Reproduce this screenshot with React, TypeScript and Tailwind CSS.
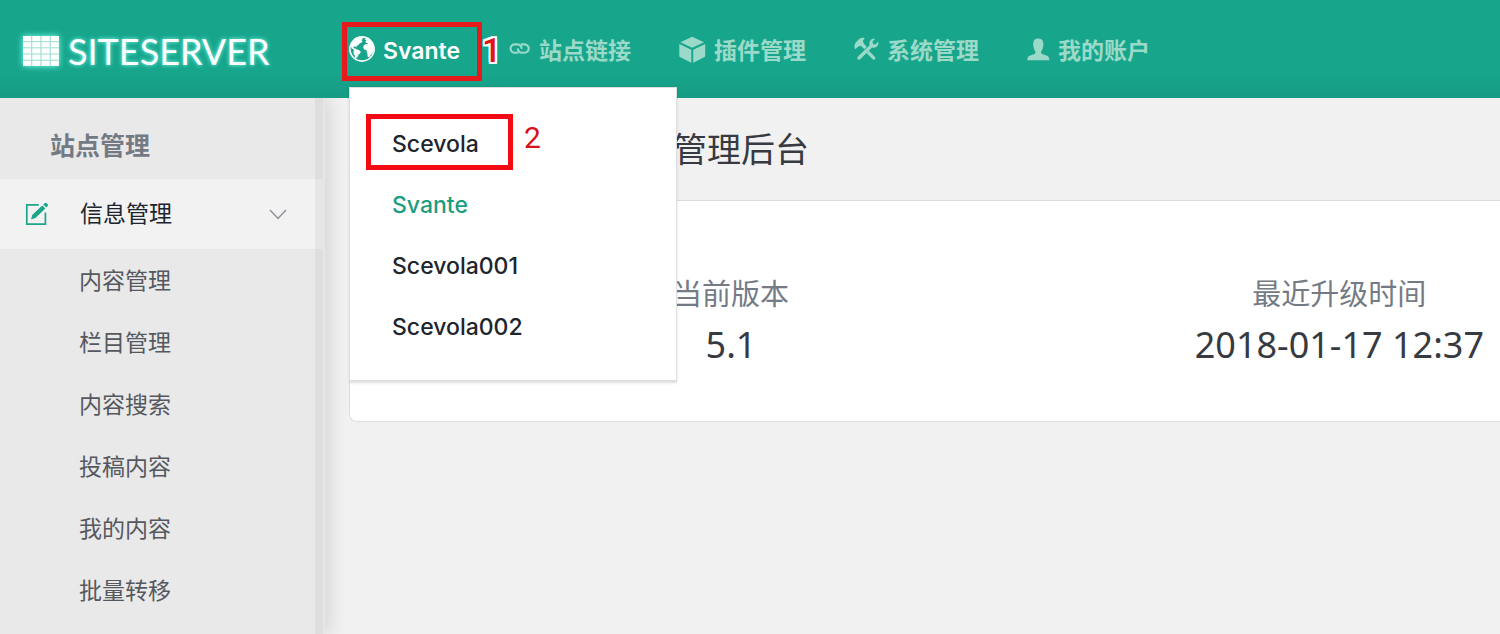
import type { ReactNode } from "react";

type NavItem = {
  label: string;
  icon: ReactNode;
};

const sites = ["Scevola", "Svante", "Scevola001", "Scevola002"];
const currentSite = "Svante";

const contentLinks = ["内容管理", "栏目管理", "内容搜索", "投稿内容", "我的内容", "批量转移"];

const navItems: NavItem[] = [
  { label: "站点链接", icon: <LinkIcon /> },
  { label: "插件管理", icon: <CubeIcon /> },
  { label: "系统管理", icon: <ToolsIcon /> },
  { label: "我的账户", icon: <PersonIcon /> },
];

function GlobeIcon() {
  return (
    <svg viewBox="0 0 26 26" className="-mt-1 size-[26px] shrink-0" fill="currentColor" aria-hidden="true">
      <circle cx="13" cy="13" r="12.1" fill="none" stroke="currentColor" strokeWidth="1.6" />
      <path d="M3.800 6 7 2.800l3.200-1.300 3.400.2.200 1.400-1.600.9 1.400 1.300-1 1.300-1.800.6-.9 1.400-1.900 1.100-.8 1.600-1.400-1-1.300.6.2 1.300 1.700.4 1 .9 2 .2 2.300 1.700-.4 1.800-1.700 1.300-.8 2-1.300 1.200-.3 1.500-1-.4-.5-3.300-1.200-2 .1-2.200.6-1.300-2.600-1.700L1.800 9.500Z" />
      <path d="m15.600 3.200 1.600-1.300 4.200 2.700 2.700 4.300.6 4.300-1.600 4.500-1.500 1-.7 1.700-1.300.9-1-.7-.2-3.300-.9-1.900.3-1.300-2.200-.3-1.500-2 .7-2.400 1.900-1.500 1.900.2.500-.8-2.300-.6-.2-1.500 1-.8Z" />
    </svg>
  );
}

function LinkIcon() {
  return (
    <svg viewBox="0 0 23 14" className="-mt-1 h-[14px] w-[22px]" fill="none" stroke="currentColor" strokeWidth="2.200" aria-hidden="true">
      <path d="M9.700 10.900H6.200A4.600 4.600 0 0 1 1.600 6.500a4.300 4.300 0 0 1 4.500-4.300h3a4.200 4.200 0 0 1 4 4.600" />
      <path d="M12.500 2.200h3.600a4.400 4.400 0 0 1 4.500 4.400 4.300 4.300 0 0 1-4.500 4.300h-2.600a4.300 4.300 0 0 1-4.200-4.500" />
    </svg>
  );
}

function CubeIcon() {
  return (
    <svg viewBox="0 0 27 27" className="-mt-1 size-[27px]" fill="currentColor" aria-hidden="true">
      <path d="M13.200.8 25 6.200l-11.800 5.600L1.400 6.200ZM.3 8l12 5.700v13L.9 20.900a1 1 0 0 1-.6-.9ZM26.200 8v12a1 1 0 0 1-.6.9l-11.400 5.800v-13Z" />
    </svg>
  );
}

function ToolsIcon() {
  return (
    <svg viewBox="0 0 25 25" className="-mt-1 size-[25px]" fill="currentColor" aria-hidden="true">
      <path d="M1 12.300c-1-2.500-.6-5.300 1.200-7.200l3-3C6.800.7 8.800.4 10.800 1.200L9.400 3.100c-.6.900-.6 1.700 0 2.600l1.100 1.600 2.300 2.600-2.500 2.300-2.600-2.800-1.300-.4c-1-.2-1.800.1-2.600.9Z" />
      <path d="m15 13.800 5.900 6.300c.8.900.7 1.600.1 2.200s-1.500.6-2.200-.1l-6.200-6Z" />
      <path d="M24 4.400c.7 2.100.2 4-1.200 5.200-1.400 1.200-3 1.400-4.700.9L6.500 22.100c-.9.900-2 .9-2.700.2s-.7-1.800.2-2.700L15.600 8.200c-.5-1.900-.2-3.700 1-5 1.200-1.200 2.700-1.700 4.400-1.300l-2.500 2.600.5 2.500 2.600.5Z" />
    </svg>
  );
}

function PersonIcon() {
  return (
    <svg viewBox="0 0 23 23" className="-mt-1 size-[23px]" fill="currentColor" aria-hidden="true">
      <path d="M.3 22.200c0-3 1-4 3-4.700 3-1 5.100-1.200 5.300-3 .1-1.100-1.200-2.500-1.700-4.100-.8-2.500-.9-4.800-.4-6.700C7.200 1.500 8.900.4 11.300.4s4.100 1.100 4.800 3.300c.5 1.900.4 4.200-.4 6.700-.5 1.600-1.800 3-1.700 4.100.2 1.800 2.300 2 5.300 3 2 .7 3 1.700 3 4.700Z" />
    </svg>
  );
}

function EditIcon() {
  return (
    <svg viewBox="0 0 24 24" className="size-6" fill="none" stroke="currentColor" aria-hidden="true">
      <path d="M13.800 2.800H1.800v19.400h18.600V10.500" strokeWidth="1.700" />
      <path d="m7.200 13 10-9.500 3.200 3-10 9.600-4.300 1.300Z" fill="currentColor" stroke="none" />
      <path d="m18.200 2.600 1.500-1.400q1-.8 2 .1l1 .9q.8.900 0 1.800l-1.300 1.400Z" fill="currentColor" stroke="none" />
    </svg>
  );
}

function LogoMark() {
  return (
    <svg viewBox="0 0 38 32" className="h-8 w-[38px] drop-shadow-[0_0_3px_#7ffff0]" aria-hidden="true">
      <path fill="#a9e3d8" d="M1 1h36v30H1z" />
      {[0, 1, 2, 3, 4].map((row) =>
        [0, 1, 2, 3].map((col) => (
          <rect key={`${row}-${col}`} x={1 + col * 9.3} y={1 + row * 6.2} width="8" height="5" fill="#fff" />
        )),
      )}
    </svg>
  );
}

function SiteMenu() {
  return (
    <ul className="absolute top-[61px] left-0 w-[328px] border border-b-2 border-[#dfdfdf] bg-white pt-[26px] pb-[22px] shadow-sm">
      {sites.map((site) => (
        <li key={site} className="relative">
          <a
            href="#"
            className={
              site === currentSite
                ? "block pl-[42px] text-[23px] leading-[61px] font-medium text-[#1c9c80]"
                : "block pl-[42px] text-[23px] leading-[61px] font-medium text-[#20242b]"
            }
          >
            {site}
          </a>
          {site === "Scevola" ? (
            <>
              <span className="absolute top-0 left-4 h-14 w-[147px] border-5 border-[#f40a12]" />
              <span className="absolute top-1 left-[174px] font-['Roboto',sans-serif] text-[30px] leading-10 font-normal text-[#d8121c]">2</span>
            </>
          ) : null}
        </li>
      ))}
    </ul>
  );
}

function Header() {
  return (
    <header className="relative z-20 flex h-[98px] items-center bg-linear-to-b from-[#17a68c] from-70% to-[#169c84] pt-1">
      <a href="#" className="flex w-[349px] shrink-0 items-center gap-2 pl-[22px] text-white">
        <LogoMark />
        <span className="font-['Lato',sans-serif] text-[36px] leading-none [text-shadow:0_0_4px_#7ffff0]">SITESERVER</span>
      </a>
      <nav className="flex items-center gap-12 text-[23px] font-bold whitespace-nowrap text-[#9bdac8]">
        <div className="relative">
          <button type="button" className="flex h-[50px] w-[112px] items-center gap-2 text-[23px] font-semibold text-white">
            <GlobeIcon />
            Svante
          </button>
          <span className="pointer-events-none absolute -top-1 -left-[7px] h-[59px] w-[140px] border-5 border-[#e8191d]" />
          <span className="absolute top-1 left-[133px] font-['Roboto',sans-serif] text-[34px] leading-10 font-medium text-[#e0151c] [text-shadow:2px_0_#fff,-2px_0_#fff,0_2px_#fff,0_-2px_#fff,2px_2px_#fff,-2px_-2px_#fff,2px_-2px_#fff,-2px_2px_#fff]">
            1
          </span>
          <SiteMenu />
        </div>
        {navItems.map((item) => (
          <a key={item.label} href="#" className="flex items-center gap-2">
            {item.icon}
            {item.label}
          </a>
        ))}
      </nav>
    </header>
  );
}

function Sidebar() {
  return (
    <aside className="z-10 w-[325px] shrink-0 border-r-2 border-[#e6e6e6] bg-[#e9e9e9] bg-[linear-gradient(to_left,#dedede_8px,transparent_8px)] shadow-[4px_0_18px_rgba(0,0,0,0.12)]">
      <h2 className="-mb-2 pt-2 pl-[50px] text-[25px] leading-[81px] font-bold text-[#747a84]">站点管理</h2>
      <button type="button" className="relative flex h-[70px] w-full items-center bg-[#f2f2f2] bg-[linear-gradient(to_left,#e6e6e6_8px,transparent_8px)] pr-[36px] pl-[25px] text-[23px] text-[#20242f]">
        <span className="text-[#1ba58a]">
          <EditIcon />
        </span>
        <span className="pl-[31px]">信息管理</span>
        <svg viewBox="0 0 18 11" className="ml-auto h-[11px] w-[18px]" fill="none" stroke="#8d929a" strokeWidth="1.5" aria-hidden="true">
          <path d="m1 1 8 8.500L17 1" />
        </svg>
      </button>
      <ul className="pt-px text-[23px] leading-[62px] text-[#55585e]">
        {contentLinks.map((label) => (
          <li key={label}>
            <a href="#" className="block pl-[79px]">
              {label}
            </a>
          </li>
        ))}
      </ul>
    </aside>
  );
}

function Stat({ label, value }: { label: string; value: string }) {
  return (
    <div className="text-center whitespace-nowrap">
      <dt className="text-[29px] leading-[50px] text-[#747b85]">{label}</dt>
      <dd className="font-['Noto_Sans',sans-serif] text-[36px] leading-[50px] text-[#373a40]">{value}</dd>
    </div>
  );
}

export default function App() {
  return (
    <div className="flex min-h-screen flex-col overflow-hidden bg-[#f1f1f1] font-['Inter','Noto_Sans_CJK_SC',sans-serif]">
      <Header />
      <div className="flex flex-1">
        <Sidebar />
        <main className="min-w-0 flex-1 pl-6">
          <h1 className="pt-[2px] pl-[324px] text-[34px] leading-[100px] text-[#373a40]">管理后台</h1>
          <dl className="flex justify-between rounded-l-lg border border-r-0 border-[#dddddd] bg-white pt-[69px] pr-4 pb-[51px] pl-[323px]">
            <Stat label="当前版本" value="5.1" />
            <Stat label="最近升级时间" value="2018-01-17 12:37" />
          </dl>
        </main>
      </div>
    </div>
  );
}
